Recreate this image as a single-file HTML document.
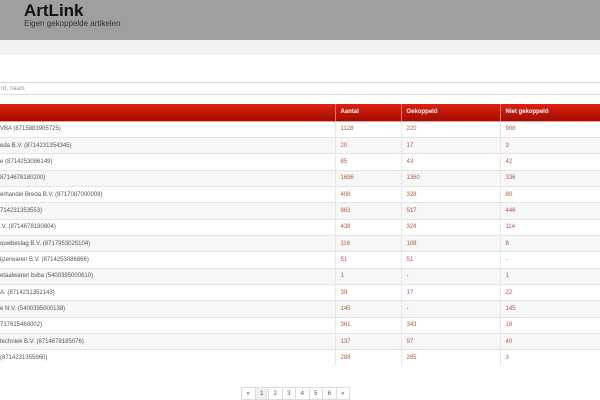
<!DOCTYPE html>
<html><head><style>
*{margin:0;padding:0;box-sizing:border-box}
body{width:600px;height:400px;overflow:hidden;background:#fff;font-family:"Liberation Sans",sans-serif;position:relative}
.hd{position:absolute;left:0;top:0;width:600px;height:40px;background:#a09f9d}
.hd h1{position:absolute;left:24px;top:1px;font-size:17px;font-weight:bold;color:#111}
.hd p{position:absolute;left:24px;top:19px;font-size:8px;color:#333}
.band{position:absolute;left:0;top:40px;width:600px;height:15px;background:#f2f2f2}
.inp{position:absolute;left:-2px;top:82px;width:604px;height:13px;border:1px solid #ddd;font-size:6px;color:#999;padding:3px 0 0 2px}
table{position:absolute;left:0;top:104px;width:600px;border-collapse:collapse;font-size:6px}
th{height:17px;background:linear-gradient(#dd2211,#a00c00);color:#fff;text-align:left;padding-left:5px;border-left:1px solid #e77;font-weight:bold;border-bottom:1px solid #f2a090}
th:first-child{border-left:none}
td{height:16.35px;padding-left:5px;color:#b05a40;border-top:1px solid #e4e4e4;border-left:1px solid #e8e8e8}
td:first-child{color:#555;border-left:none;padding-left:0}
tr:nth-child(odd) td{background:#f7f7f7}
.pg{position:absolute;left:242px;top:387px;display:flex;font-size:6px;color:#555}
.pg span{width:14.5px;height:13px;border:1px solid #ddd;margin-left:-1px;text-align:center;line-height:12px}
.pg span.a{background:#eee}
</style></head><body>
<div class="hd"><h1>ArtLink</h1><p>Eigen gekoppelde artikelen</p></div>
<div class="band"></div>
<div class="inp">rd, naam</div>
<table>
<tr><th style="width:335px"></th><th style="width:66px">Aantal</th><th style="width:99px">Gekoppeld</th><th>Niet gekoppeld</th></tr>
<tr><td>VBA (8715883905725)</td><td>1128</td><td>220</td><td>908</td></tr>
<tr><td>eda B.V. (8714231354345)</td><td>20</td><td>17</td><td>3</td></tr>
<tr><td>e (8714253086149)</td><td>85</td><td>43</td><td>42</td></tr>
<tr><td>8714678180200)</td><td>1696</td><td>1360</td><td>336</td></tr>
<tr><td>erhandel Breda B.V. (8717087000008)</td><td>408</td><td>328</td><td>80</td></tr>
<tr><td>714231353553)</td><td>963</td><td>517</td><td>446</td></tr>
<tr><td>.V. (8714678180804)</td><td>438</td><td>324</td><td>114</td></tr>
<tr><td>ouwbeslag B.V. (8717953025104)</td><td>116</td><td>108</td><td>8</td></tr>
<tr><td>ijzerwaren B.V. (8714253086866)</td><td>51</td><td>51</td><td>-</td></tr>
<tr><td>etaalwaren bvba (5400395000610)</td><td>1</td><td>-</td><td>1</td></tr>
<tr><td>A. (8714231352143)</td><td>39</td><td>17</td><td>22</td></tr>
<tr><td>e N.V. (5400395000138)</td><td>145</td><td>-</td><td>145</td></tr>
<tr><td>717625460002)</td><td>361</td><td>343</td><td>18</td></tr>
<tr><td>techniek B.V. (8714678185076)</td><td>137</td><td>97</td><td>40</td></tr>
<tr><td>(8714231355960)</td><td>288</td><td>285</td><td>3</td></tr>
</table>
<div class="pg"><span>«</span><span class="a">1</span><span>2</span><span>3</span><span>4</span><span>5</span><span>6</span><span>»</span></div>
</body></html>
